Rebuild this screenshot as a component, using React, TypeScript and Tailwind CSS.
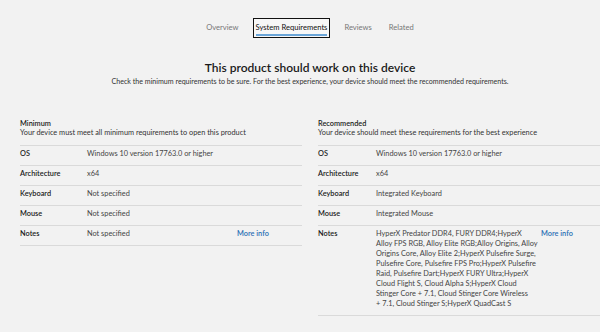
import React from "react";

type Row = { label: string; value: React.ReactNode; more?: boolean };

const notesLines = [
  "HyperX Predator DDR4, FURY DDR4;HyperX",
  "Alloy FPS RGB, Alloy Elite RGB;Alloy Origins, Alloy",
  "Origins Core, Alloy Elite 2;HyperX Pulsefire Surge,",
  "Pulsefire Core, Pulsefire FPS Pro;HyperX Pulsefire",
  "Raid, Pulsefire Dart;HyperX FURY Ultra;HyperX",
  "Cloud Flight S, Cloud Alpha S;HyperX Cloud",
  "Stinger Core + 7.1, Cloud Stinger Core Wireless",
  "+ 7.1, Cloud Stinger S;HyperX QuadCast S",
];

const notesRec = (
  <>
    {notesLines.map((l) => (
      <span key={l} className="block whitespace-nowrap">
        {l}
      </span>
    ))}
  </>
);

function Column({
  title,
  subtitle,
  rows,
  labelW,
  valueW,
}: {
  title: string;
  subtitle: string;
  rows: Row[];
  labelW: string;
  valueW: string;
}) {
  return (
    <div className="w-[282px] text-[7.35px]">
      <div className="pb-[7px] border-b border-[#dadada]">
        <div className="text-[#1a1a1a] font-semibold leading-[9px]">{title}</div>
        <div className="text-[#333] leading-[10px]">{subtitle}</div>
      </div>
      {rows.map((r) => (
        <div key={r.label} className="flex border-b border-[#dadada] pt-[3px] pb-[6px] leading-[10px]">
          <div className={`${labelW} shrink-0 text-[#1a1a1a] font-semibold`}>{r.label}</div>
          <div className={`${valueW} shrink-0 text-[#444]`}>{r.value}</div>
          {r.more && <div className="text-[#2a6fb5] font-semibold">More info</div>}
        </div>
      ))}
    </div>
  );
}

export default function App() {
  return (
    <div className="w-[600px] h-[332px] bg-[#f2f2f2] overflow-hidden">
      <div
        className="w-[620px] text-[7.1px]"
        style={{ fontFamily: 'Lato, "Noto Sans", sans-serif' }}
      >
        <div className="flex justify-center items-center pt-[18px] text-[7.6px] text-[#777]">
          <span>Overview</span>
          <span className="relative ml-[14px] mr-[14px] border-[1.5px] border-[#111] px-[2px] h-[20px] flex items-center text-[#111] bg-[#f7f7f7]">
            System Requirements
            <span className="absolute left-[2px] right-[2px] bottom-[1px] h-[2px] bg-[#6aa5d8]" />
          </span>
          <span>Reviews</span>
          <span className="ml-[17px]">Related</span>
        </div>
        <div className="mt-[22px] text-center text-[12px] font-semibold text-[#1a1a1a] leading-[16px]">
          This product should work on this device
        </div>
        <div className="mt-[1px] text-center text-[#333] leading-[10px]">
          Check the minimum requirements to be sure. For the best experience, your device should meet the recommended requirements.
        </div>
        <div className="flex gap-[16px] px-[20px] mt-[32px]">
          <Column
            title="Minimum"
            subtitle="Your device must meet all minimum requirements to open this product"
            labelW="w-[67px]"
            valueW="w-[150px]"
            rows={[
              { label: "OS", value: "Windows 10 version 17763.0 or higher" },
              { label: "Architecture", value: "x64" },
              { label: "Keyboard", value: "Not specified" },
              { label: "Mouse", value: "Not specified" },
              { label: "Notes", value: "Not specified", more: true },
            ]}
          />
          <Column
            title="Recommended"
            subtitle="Your device should meet these requirements for the best experience"
            labelW="w-[58px]"
            valueW="w-[165px]"
            rows={[
              { label: "OS", value: "Windows 10 version 17763.0 or higher" },
              { label: "Architecture", value: "x64" },
              { label: "Keyboard", value: "Integrated Keyboard" },
              { label: "Mouse", value: "Integrated Mouse" },
              { label: "Notes", value: notesRec, more: true },
            ]}
          />
        </div>
      </div>
    </div>
  );
}
